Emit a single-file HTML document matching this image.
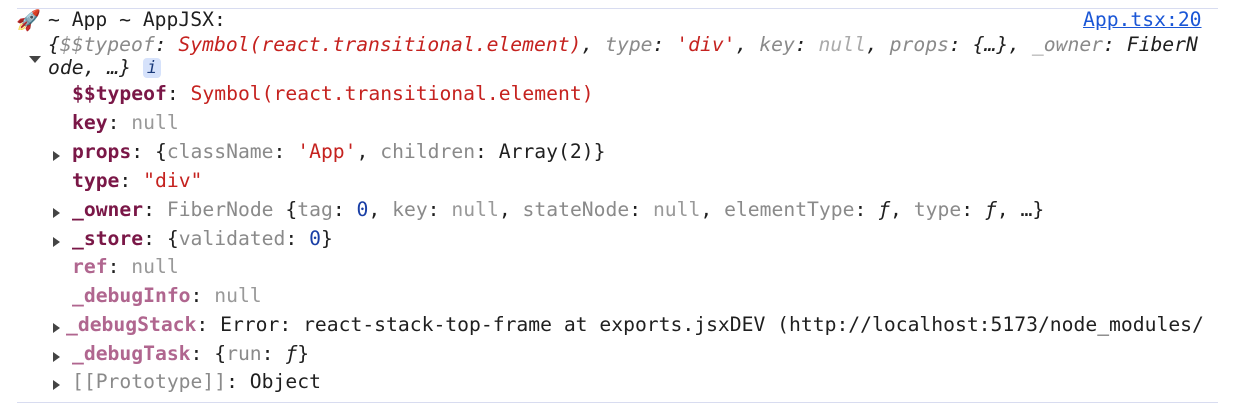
<!DOCTYPE html>
<html><head><meta charset="utf-8"><style>
html,body{margin:0;padding:0;background:#fff;width:1248px;height:404px;overflow:hidden}
body{font-family:"DejaVu Sans Mono","Liberation Mono",monospace;font-size:19.7px;color:#1f1f1f;position:relative}
.l{position:absolute;white-space:pre;line-height:24px}
.k{color:#7a1747;font-weight:bold}
.kl{color:#b0668f;font-weight:bold}
.s{color:#c5221f}
.g{color:#8a8a8a}
.n{color:#1a3fa6}
.i{font-style:italic}
.tri{position:absolute;width:0;height:0;border-top:5px solid transparent;border-bottom:5px solid transparent;border-left:7px solid #444}
.down{position:absolute;width:0;height:0;border-left:6px solid transparent;border-right:6px solid transparent;border-top:7px solid #444}
.hr{position:absolute;left:17px;width:1201px;height:1px;background:#d8dcf0}
a{color:#1a56d6;text-decoration:underline}
.badge{display:inline-block;background:#d6e2fb;color:#1a3a7a;border-radius:4px;width:18px;height:20px;line-height:20px;text-align:center;font-size:17px;vertical-align:1px}
</style></head><body>
<div class="hr" style="top:8px"></div>
<div class="hr" style="top:402px"></div>
<div class="l" style="left:16px;top:8px;font-family:'DejaVu Sans',sans-serif;font-size:20px">🚀</div>
<div class="l" style="left:48px;top:8px">~ App ~ AppJSX:</div>
<div class="l" style="left:1083px;top:8px"><a>App.tsx:20</a></div>
<div class="l i" style="left:48px;top:33px">{<span class="g">$$typeof</span>: <span class="s">Symbol(react.transitional.element)</span>, <span class="g">type</span>: <span class="s">'div'</span>, <span class="g">key</span>: <span class="g" style="color:#aaa">null</span>, <span class="g">props</span>: {…}, <span class="g">_owner</span>: FiberN</div>
<div class="down" style="left:29px;top:56px"></div>
<div class="l" style="left:48px;top:56px"><span class="i">ode, …}</span> <span class="badge i">i</span></div>
<div class="l" style="left:72px;top:82px"><span class="k">$$typeof</span>: <span class="s">Symbol(react.transitional.element)</span></div>
<div class="l" style="left:72px;top:111px"><span class="k">key</span>: <span class="g" style="color:#999">null</span></div>
<div class="tri" style="left:53px;top:151px"></div>
<div class="l" style="left:72px;top:140px"><span class="k">props</span>: {<span class="g">className</span>: <span class="s">'App'</span>, <span class="g">children</span>: Array(2)}</div>
<div class="l" style="left:72px;top:169px"><span class="k">type</span>: <span class="s">"div"</span></div>
<div class="tri" style="left:53px;top:208px"></div>
<div class="l" style="left:72px;top:198px"><span class="k">_owner</span>: <span class="g">FiberNode</span> {<span class="g">tag</span>: <span class="n">0</span>, <span class="g">key</span>: <span class="g" style="color:#999">null</span>, <span class="g">stateNode</span>: <span class="g" style="color:#999">null</span>, <span class="g">elementType</span>: <span class="i">ƒ</span>, <span class="g">type</span>: <span class="i">ƒ</span>, …}</div>
<div class="tri" style="left:53px;top:237px"></div>
<div class="l" style="left:72px;top:227px"><span class="k">_store</span>: {<span class="g">validated</span>: <span class="n">0</span>}</div>
<div class="l" style="left:72px;top:255px"><span class="kl">ref</span>: <span class="g" style="color:#999">null</span></div>
<div class="l" style="left:72px;top:284px"><span class="kl">_debugInfo</span>: <span class="g" style="color:#999">null</span></div>
<div class="tri" style="left:53px;top:323px"></div>
<div class="l" style="left:66px;top:313px"><span class="kl">_debugStack</span>: Error: react-stack-top-frame at exports.jsxDEV (http://localhost:5173/node_modules/</div>
<div class="tri" style="left:53px;top:352px"></div>
<div class="l" style="left:72px;top:342px"><span class="kl">_debugTask</span>: {<span class="g">run</span>: <span class="i">ƒ</span>}</div>
<div class="tri" style="left:53px;top:380px"></div>
<div class="l" style="left:72px;top:370px"><span class="g">[[Prototype]]</span>: Object</div>
</body></html>
